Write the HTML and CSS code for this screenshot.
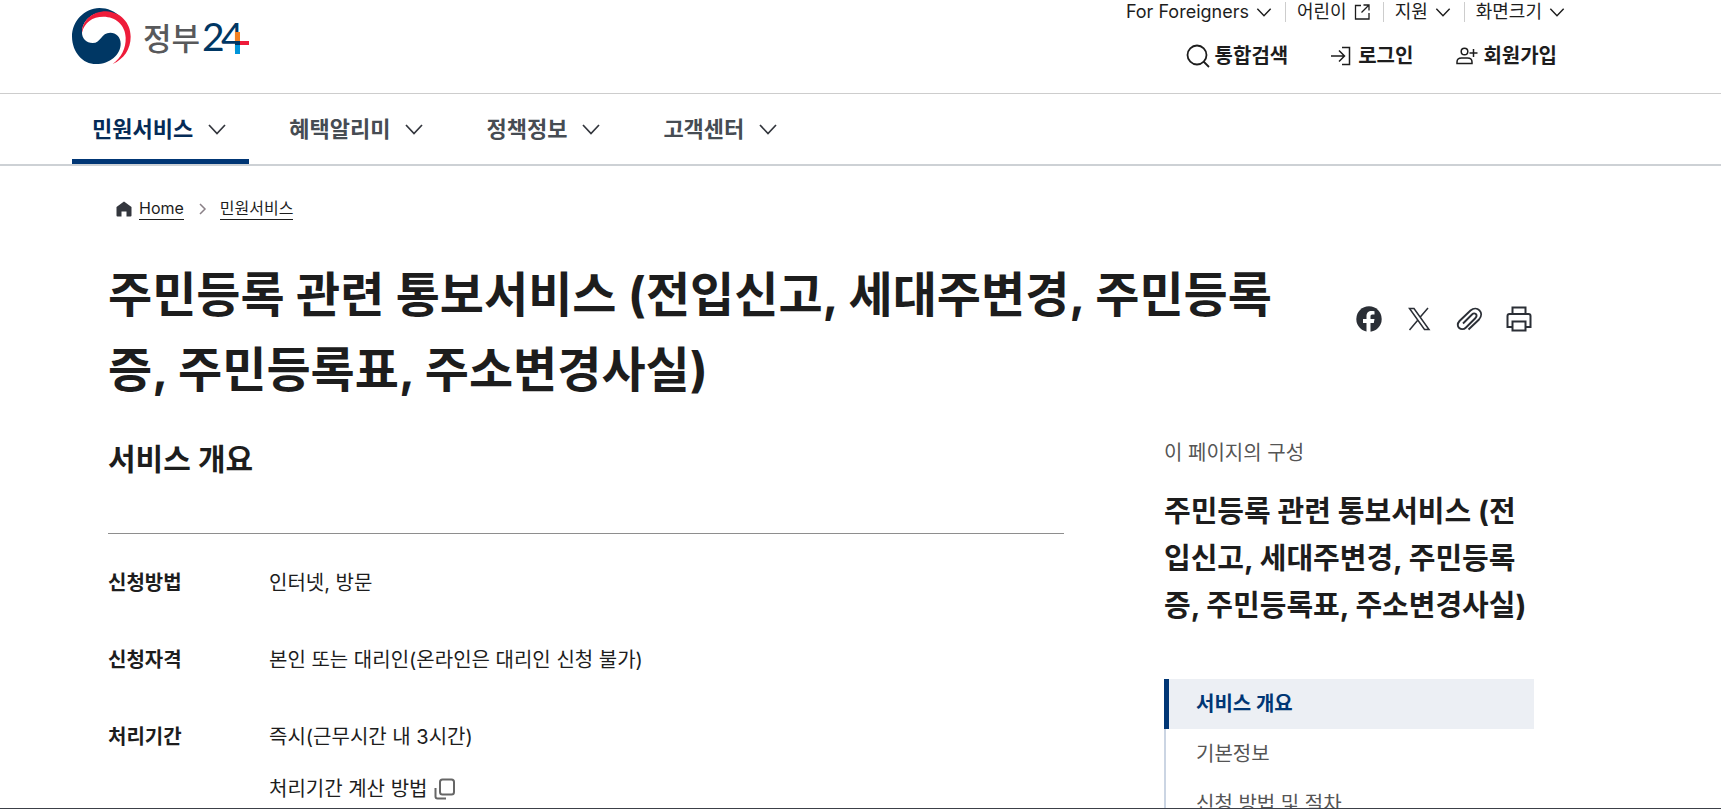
FILE: index.html
```html
<!DOCTYPE html>
<html lang="ko">
<head>
  <meta charset="UTF-8" />
  <meta name="viewport" content="width=device-width, initial-scale=1.0"/>
  <title>주민등록 관련 통보서비스 | 정부24</title>
  <link rel="stylesheet" href="styles.css">
</head>
<body>
  <svg class="sprite" aria-hidden="true">
    <symbol id="chevron" viewBox="0 0 24 24">
      <path d="M4 8l8 8.500 8-8.500" fill="none" stroke="currentColor" stroke-width="1.700"/>
    </symbol>
  </svg>

  <div class="page">
    <header class="header">
      <a class="logo" href="#" aria-label="정부24">
        <svg class="logo-mark" viewBox="66 24 177 168">
          <path fill="#003764" d="M214 54C196 33 172 24 148 24C102 26 66 63 66 110C67 157 98 192 138 192C180 192 212 164 212 131C212 111 198 98 181 98C153 98 153 129 128 129C109 129 96 115 96 98C96 62 126 37 162 37C184 37 201 43 214 54Z"/>
          <path fill="#ee1c3a" d="M96 98C96 61 128 34 168 34C211 36 242 68 242 110C242 148 222 176 188 192C214 172 228 145 227 113C226 75 197 50 160 50C127 50 103 67 96 98Z"/>
        </svg>
        <svg class="logo-text" viewBox="0 0 108 48">
          <text class="logo-ko" x="-1" y="33">정부</text>
          <text class="logo-num" x="58 77" y="34">24</text>
          <path fill="#003764" d="M91 24h5v4h-5z"/>
          <path fill="#f58220" d="M91 15h5v9h-5z"/>
          <path fill="#0095da" d="M91 28h5v9h-5z"/>
          <path fill="#ee1c3a" d="M96 24h9v4h-9z"/>
        </svg>
      </a>

      <div class="header-side">
        <div class="util">
          <button type="button">For Foreigners <svg><use href="#chevron"/></svg></button>
          <a href="#">어린이
            <svg viewBox="0 0 20 20" fill="none" stroke="currentColor" stroke-width="1.300"><path d="M9 3.500H3.500v13.500H17V11M11.500 3H17v5.500M17 3l-7.500 7.500"/></svg>
          </a>
          <button type="button">지원 <svg><use href="#chevron"/></svg></button>
          <button type="button">화면크기 <svg><use href="#chevron"/></svg></button>
        </div>
        <div class="actions">
          <button type="button">
            <svg viewBox="0 0 24 24" fill="none" stroke="currentColor" stroke-width="1.800"><circle cx="11" cy="11" r="9.500"/><path d="M17.500 17.500l5.500 5.500"/></svg>
            통합검색
          </button>
          <a href="#">
            <svg viewBox="0 0 24 24" fill="none" stroke="currentColor" stroke-width="1.500"><path d="M13 3.500h7.500v17H13M2 12h13M10 6.500l5.500 5.500-5.500 5.500"/></svg>
            로그인
          </a>
          <a href="#">
            <svg viewBox="0 0 24 24" fill="none" stroke="currentColor" stroke-width="1.500"><circle cx="10.500" cy="7.500" r="3.300"/><path d="M3 19.500v-1.500c0-2.500 2-4 4.500-4h6c2.500 0 4.500 1.500 4.500 4v1.500zM19.500 5v8M15.500 9h8"/></svg>
            회원가입
          </a>
        </div>
      </div>
    </header>

    <nav class="gnb">
      <button type="button" class="active">민원서비스 <svg><use href="#chevron"/></svg></button>
      <button type="button">혜택알리미 <svg><use href="#chevron"/></svg></button>
      <button type="button">정책정보 <svg><use href="#chevron"/></svg></button>
      <button type="button">고객센터 <svg><use href="#chevron"/></svg></button>
    </nav>

    <main class="container">
      <nav class="breadcrumb">
        <svg class="home" viewBox="0 0 16 16"><path fill="#33363d" d="M8 0.500L15.500 6v8.500q0 1-1 1H10.500V10.500h-5v5H1.500q-1 0-1-1V6z"/></svg>
        <a href="#">Home</a>
        <svg class="sep" viewBox="0 0 8 12"><path d="M1 1l5 5-5 5" fill="none" stroke="#8a8087" stroke-width="1.500"/></svg>
        <a href="#">민원서비스</a>
      </nav>

      <div class="title-row">
        <h1>주민등록 관련 통보서비스 (전입신고, 세대주변경, 주민등록증, 주민등록표, 주소변경사실)</h1>
        <div class="share">
          <button type="button" aria-label="페이스북">
            <svg viewBox="0 0 30 30"><circle cx="15" cy="15" r="12.700" fill="#2b2f36"/><path fill="#fff" d="M12.500 28V19H9v-4h3.500v-2.500c0-4 2-5.500 5-5.500 1 0 2 .1 3 .3v3.200h-2c-1.500 0-2 .9-2 2V15h4l-.7 4h-3.300v9z"/></svg>
          </button>
          <button type="button" aria-label="X">
            <svg viewBox="0 0 30 30" fill="none" stroke="#2b2f36" stroke-width="1.500"><path d="M5.500 4.500h4.500L25 25.500h-4.500zM24 4L16.500 12.800M13.500 16.500L5.500 26"/></svg>
          </button>
          <button type="button" aria-label="링크 복사">
            <svg viewBox="0 0 30 30" fill="none" stroke="#2b2f36" stroke-width="1.900"><path d="M14.500 25.500L25 15.500C31 8.500 23 1 16.500 6.500L5.500 17C0.500 22.500 7.500 28 12 23.500L21.500 14C24.500 10.500 20.500 8 18 10.500L9 19.500"/></svg>
          </button>
          <button type="button" aria-label="인쇄">
            <svg viewBox="0 0 30 30" fill="none" stroke="#2b2f36" stroke-width="2"><path d="M8.500 10V3.500h13V10M8.500 23H3.500V12q0-2 2-2h19q2 0 2 2v11h-5M8.500 17.500h13v9h-13z"/></svg>
          </button>
        </div>
      </div>

      <div class="columns">
        <section class="overview">
          <h2>서비스 개요</h2>
          <dl>
            <div class="row">
              <dt>신청방법</dt>
              <dd>인터넷, 방문</dd>
            </div>
            <div class="row">
              <dt>신청자격</dt>
              <dd>본인 또는 대리인(온라인은 대리인 신청 불가)</dd>
            </div>
            <div class="row">
              <dt>처리기간</dt>
              <dd>
                즉시(근무시간 내 3시간)
                <a class="calc" href="#">처리기간 계산 방법
                  <svg viewBox="0 0 22 22" fill="none" stroke="#666" stroke-width="2"><rect x="6" y="1.500" width="14" height="15" rx="2.500"/><path d="M1.500 10v8.500q0 2 2 2H12"/></svg>
                </a>
              </dd>
            </div>
          </dl>
        </section>

        <aside class="side">
          <p class="side-label">이 페이지의 구성</p>
          <h2>주민등록 관련 통보서비스 (전입신고, 세대주변경, 주민등록증, 주민등록표, 주소변경사실)</h2>
          <ul class="toc">
            <li class="active"><a href="#">서비스 개요</a></li>
            <li><a href="#">기본정보</a></li>
            <li><a href="#">신청 방법 및 절차</a></li>
          </ul>
        </aside>
      </div>
    </main>
  </div>
</body>
</html>
```
FILE: styles.css
```css
* {
  box-sizing: border-box;
  margin: 0;
  padding: 0;
}

body {
  font-family: Inter, "Noto Sans CJK KR", sans-serif;
  font-size: 20px;
  line-height: 32px;
  color: #1d1d1d;
  background: #fff;
}

a {
  color: inherit;
  text-decoration: none;
}

button {
  font: inherit;
  color: inherit;
  background: none;
  border: 0;
  cursor: pointer;
}

.sprite {
  display: none;
}

.page {
  height: 100vh;
  overflow: hidden;
  border-bottom: 1px solid #3c4048;
}

/* header */
.header {
  display: flex;
  justify-content: space-between;
  padding: 0 154px 17px 72px;
  border-bottom: 1px solid #cdcdcd;
}

.logo {
  display: flex;
  align-items: flex-start;
  gap: 13px;
  padding-top: 8px;
}

.logo-mark {
  width: 59px;
  height: 56px;
}

.logo-text {
  width: 108px;
  height: 48px;
  margin-top: 9px;
  overflow: visible;
}

.logo-ko {
  font-size: 31px;
  font-weight: 500;
  fill: #58595b;
}

.logo-num {
  font-family: Lato, sans-serif;
  font-size: 39px;
  fill: #003764;
}

.util,
.actions {
  display: flex;
  justify-content: flex-end;
}

.util {
  height: 24px;
  font-size: 18px;
  line-height: 24px;
  align-items: center;
}

.util > * {
  display: flex;
  align-items: center;
  gap: 5px;
  height: 20px;
  padding: 0 11px;
  border-right: 1px solid #cdcdcd;
}

.util > :last-child {
  border-right: 0;
  padding-right: 0;
}

.util svg {
  width: 20px;
  height: 20px;
}

.actions {
  gap: 41px;
  margin-top: 12px;
  padding-right: 10px;
  font-weight: 700;
  line-height: 40px;
}

.actions > * {
  display: flex;
  align-items: center;
  gap: 5px;
}

.actions svg {
  width: 24px;
  height: 24px;
}

/* main menu */
.gnb {
  display: flex;
  gap: 20px;
  padding-left: 72px;
  border-bottom: 2px solid #cdd1d5;
}

.gnb button {
  display: flex;
  align-items: center;
  gap: 12px;
  height: 70px;
  padding: 5px 20px 0;
  border-bottom: 5px solid transparent;
  font-size: 22px;
  font-weight: 700;
  color: #464c53;
}

.gnb .active {
  color: #052b57;
  border-color: #003675;
}

.gnb svg {
  width: 24px;
  height: 24px;
  color: #33363d;
}

/* content */
.container {
  padding: 31px 187px 0 108px;
}

.breadcrumb {
  display: flex;
  align-items: center;
  padding-left: 8px;
  font-size: 16px;
  line-height: 22px;
}

.breadcrumb a {
  border-bottom: 1px solid #1d1d1d;
}

.breadcrumb .home {
  width: 16px;
  height: 16px;
  margin-right: 7px;
}

.breadcrumb .sep {
  width: 8px;
  height: 12px;
  margin: 0 13px 0 15px;
}

.title-row {
  display: flex;
  align-items: flex-start;
  justify-content: space-between;
  gap: 60px;
  margin-top: 37px;
}

h1 {
  font-size: 48px;
  line-height: 75px;
}

.share {
  display: flex;
  gap: 20px;
  padding-top: 47px;
}

.share svg {
  display: block;
  width: 30px;
  height: 30px;
}

.columns {
  display: grid;
  grid-template-columns: 1fr 370px;
  gap: 100px;
  margin-top: 30px;
}

.overview h2 {
  padding-bottom: 52px;
  border-bottom: 1px solid #8e8e8e;
  font-size: 30px;
  line-height: 44px;
}

.overview dl {
  display: grid;
  gap: 45px;
  padding-top: 33px;
}

.row {
  display: flex;
}

.row dt {
  width: 161px;
  font-weight: 700;
}

.calc {
  display: flex;
  align-items: center;
  gap: 7px;
  margin-top: 20px;
}

.calc svg {
  width: 22px;
  height: 22px;
}

.side-label {
  color: #555;
}

.side h2 {
  margin-top: 19px;
  font-size: 29px;
  line-height: 47px;
}

.toc {
  margin-top: 50px;
  list-style: none;
}

.toc a {
  display: block;
  padding: 9px 0 9px 30px;
  border-left: 2px solid #cbd5e3;
  color: #555;
}

.toc .active a {
  padding-left: 27px;
  border-left: 5px solid #003675;
  background: #eceff4;
  color: #003675;
  font-weight: 700;
}
```
